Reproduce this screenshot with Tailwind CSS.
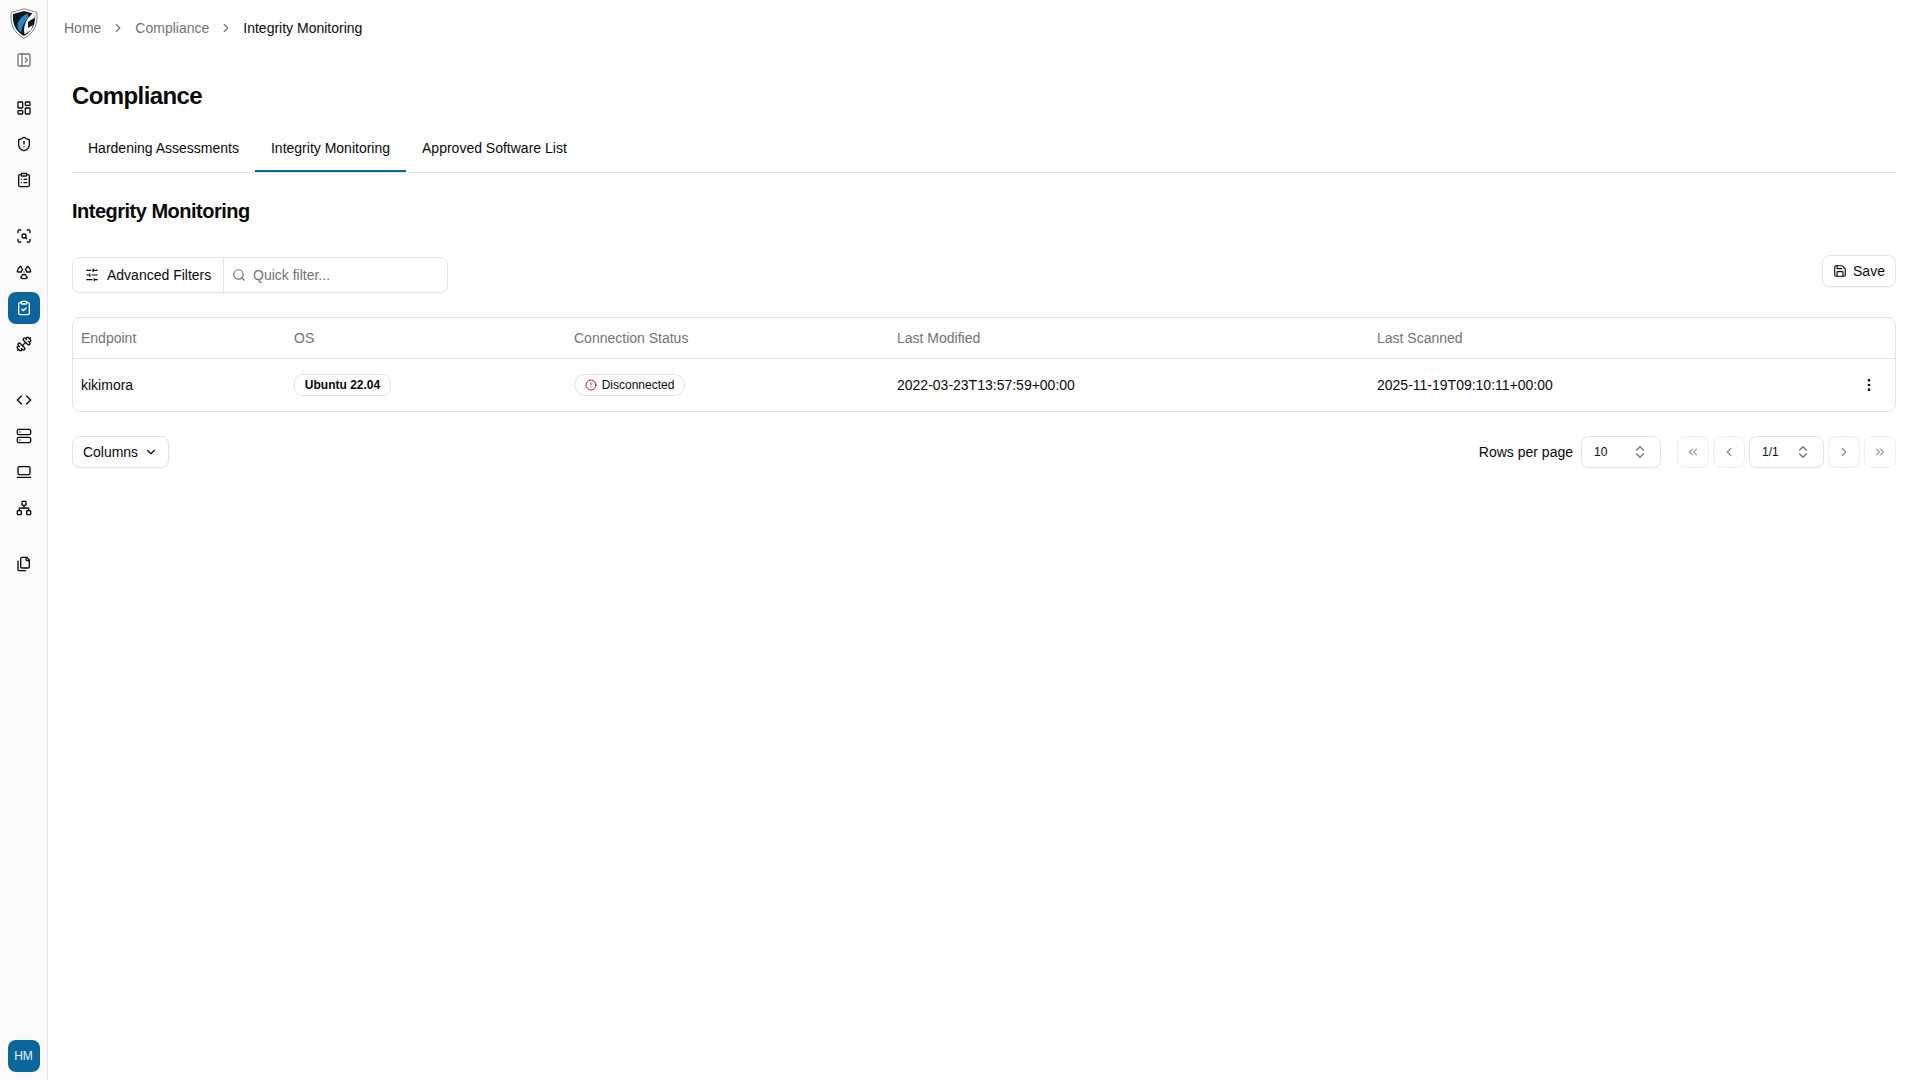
<!DOCTYPE html>
<html lang="en">
<head>
    <meta charset="UTF-8">
    <meta name="viewport" content="width=device-width, initial-scale=1.0">
    <title>Compliance - Integrity Monitoring</title>
    <script src="https://cdn.jsdelivr.net/npm/@tailwindcss/browser@4"></script>
</head>
<body class="bg-white text-[#0a0a0a] font-['Liberation_Sans',Arial,sans-serif] text-sm h-screen overflow-hidden">
<div class="flex h-[1080px]">
    <!-- Sidebar -->
    <aside class="w-[48px] shrink-0 bg-[#fafafa] border-r border-[#e5e5e5] flex flex-col items-center">
        <svg class="w-[28px] h-[31px] mt-[8px]" viewBox="0 0 28 31">
            <path d="M14 .8 L26.8 4.4 C27.8 14 25.5 24.5 14 30.4 C2.5 24.5 .2 14 1.2 4.4 Z" fill="#fff" stroke="#7d848c" stroke-width="1"/>
            <path d="M14 3 L25 6 C25.8 14 23.5 23 14 28 C4.5 23 2.2 14 3 6 Z" fill="#10161f"/>
            <path d="M17.5 5.5 C12 8 8 12.5 7.5 17.5 C7.3 20.5 9 23 11 24.5 C11.5 19.5 14 14 18.5 9.5 Z" fill="#1f87c9"/>
            <path d="M21 7 L24 3.5 L25 6 L24.5 10 L18 14 L18 20 L23 17 L21 22 L14.5 26.5 L14 21.5 C14.5 15.5 17 10.5 21 7 Z" fill="#fff"/>
            <path d="M19.5 13 L23.5 10.5 L23 15.5 L19.5 18 Z" fill="#10161f"/>
        </svg>
        <button class="w-8 h-8 mt-[5px] flex items-center justify-center text-[#737373]">
            <svg class="w-4 h-4" viewBox="0 0 24 24" fill="none" stroke="currentColor" stroke-width="2" stroke-linecap="round" stroke-linejoin="round"><rect x="3" y="3" width="18" height="18" rx="2"/><path d="M9 3v18"/><path d="m14 9 3 3-3 3"/></svg>
        </button>

        <nav class="mt-4 flex flex-col gap-1">
            <a class="w-8 h-8 flex items-center justify-center">
                <svg class="w-4 h-4" viewBox="0 0 24 24" fill="none" stroke="currentColor" stroke-width="2" stroke-linecap="round" stroke-linejoin="round"><rect x="3" y="3" width="7" height="9" rx="1"/><rect x="14" y="3" width="7" height="5" rx="1"/><rect x="14" y="12" width="7" height="9" rx="1"/><rect x="3" y="16" width="7" height="5" rx="1"/></svg>
            </a>
            <a class="w-8 h-8 flex items-center justify-center">
                <svg class="w-4 h-4" viewBox="0 0 24 24" fill="none" stroke="currentColor" stroke-width="2" stroke-linecap="round" stroke-linejoin="round"><path d="M20 13c0 5-3.5 7.5-7.66 8.95a1 1 0 0 1-.67-.01C7.5 20.5 4 18 4 13V6a1 1 0 0 1 1-1c2 0 4.5-1.2 6.24-2.72a1.17 1.17 0 0 1 1.52 0C14.51 3.81 17 5 19 5a1 1 0 0 1 1 1z"/><path d="M12 8v4"/><path d="M12 16h.01"/></svg>
            </a>
            <a class="w-8 h-8 flex items-center justify-center">
                <svg class="w-4 h-4" viewBox="0 0 24 24" fill="none" stroke="currentColor" stroke-width="2" stroke-linecap="round" stroke-linejoin="round"><rect x="8" y="2" width="8" height="4" rx="1"/><path d="M16 4h2a2 2 0 0 1 2 2v14a2 2 0 0 1-2 2H6a2 2 0 0 1-2-2V6a2 2 0 0 1 2-2h2"/><path d="M12 11h4"/><path d="M12 16h4"/><path d="M8 11h.01"/><path d="M8 16h.01"/></svg>
            </a>
        </nav>

        <nav class="mt-6 flex flex-col gap-1">
            <a class="w-8 h-8 flex items-center justify-center">
                <svg class="w-4 h-4" viewBox="0 0 24 24" fill="none" stroke="currentColor" stroke-width="2" stroke-linecap="round" stroke-linejoin="round"><path d="M7 3H5a2 2 0 0 0-2 2v2"/><path d="M17 3h2a2 2 0 0 1 2 2v2"/><path d="M21 17v2a2 2 0 0 1-2 2h-2"/><path d="M7 21H5a2 2 0 0 1-2-2v-2"/><circle cx="12" cy="12" r="3"/><path d="m16 16-1.9-1.9"/></svg>
            </a>
            <a class="w-8 h-8 flex items-center justify-center">
                <svg class="w-4 h-4" viewBox="0 0 24 24" fill="none" stroke="currentColor" stroke-width="2" stroke-linecap="round" stroke-linejoin="round"><path d="M12 12h.01"/><path d="M7.5 4.2c-.3-.5-.9-.7-1.3-.4C3.9 5.5 2.3 8.1 2 11c-.1.5.4 1 1 1h5c0-1.5.8-2.8 2-3.4-1.1-1.9-2-3.5-2.5-4.4z"/><path d="M21 12c.6 0 1-.4 1-1-.3-2.9-1.8-5.5-4.1-7.1-.4-.3-1.1-.2-1.3.3-.6.9-1.5 2.5-2.6 4.3 1.2.7 2 2 2 3.5h5z"/><path d="M7.5 19.8c-.3.5-.1 1.1.4 1.3 2.6 1.2 5.6 1.2 8.2 0 .5-.2.7-.8.4-1.3-.5-.9-1.4-2.5-2.5-4.3-1.2.7-2.8.7-4 0-1.1 1.8-2 3.4-2.5 4.3z"/></svg>
            </a>
            <a class="w-8 h-8 flex items-center justify-center rounded-lg bg-[#0b659f] text-white">
                <svg class="w-4 h-4" viewBox="0 0 24 24" fill="none" stroke="currentColor" stroke-width="2" stroke-linecap="round" stroke-linejoin="round"><rect x="8" y="2" width="8" height="4" rx="1"/><path d="M16 4h2a2 2 0 0 1 2 2v14a2 2 0 0 1-2 2H6a2 2 0 0 1-2-2V6a2 2 0 0 1 2-2h2"/><path d="m9 14 2 2 4-4"/></svg>
            </a>
            <a class="w-8 h-8 flex items-center justify-center">
                <svg class="w-4 h-4" viewBox="0 0 24 24" fill="none" stroke="currentColor" stroke-width="2" stroke-linecap="round" stroke-linejoin="round"><path d="M17.596 12.768a2 2 0 1 0 2.829-2.829l-1.768-1.767a2 2 0 0 0 2.828-2.829l-2.828-2.828a2 2 0 0 0-2.829 2.828l-1.767-1.768a2 2 0 1 0-2.829 2.829z"/><path d="m2.5 21.5 1.4-1.4"/><path d="m20.1 3.9 1.4-1.4"/><path d="M5.343 21.485a2 2 0 1 0 2.829-2.828l1.767 1.768a2 2 0 1 0 2.829-2.829l-6.364-6.364a2 2 0 1 0-2.829 2.829l1.768 1.767a2 2 0 0 0-2.828 2.829z"/><path d="m9.6 14.4 4.8-4.8"/></svg>
            </a>
        </nav>

        <nav class="mt-6 flex flex-col gap-1">
            <a class="w-8 h-8 flex items-center justify-center">
                <svg class="w-4 h-4" viewBox="0 0 24 24" fill="none" stroke="currentColor" stroke-width="2" stroke-linecap="round" stroke-linejoin="round"><path d="m16 18 6-6-6-6"/><path d="m8 6-6 6 6 6"/></svg>
            </a>
            <a class="w-8 h-8 flex items-center justify-center">
                <svg class="w-4 h-4" viewBox="0 0 24 24" fill="none" stroke="currentColor" stroke-width="2" stroke-linecap="round" stroke-linejoin="round"><rect x="2" y="2" width="20" height="8" rx="2"/><rect x="2" y="14" width="20" height="8" rx="2"/><path d="M6 6h.01"/><path d="M6 18h.01"/></svg>
            </a>
            <a class="w-8 h-8 flex items-center justify-center">
                <svg class="w-4 h-4" viewBox="0 0 24 24" fill="none" stroke="currentColor" stroke-width="2" stroke-linecap="round" stroke-linejoin="round"><rect x="3" y="4" width="18" height="12" rx="2"/><path d="M2 20h20"/></svg>
            </a>
            <a class="w-8 h-8 flex items-center justify-center">
                <svg class="w-4 h-4" viewBox="0 0 24 24" fill="none" stroke="currentColor" stroke-width="2" stroke-linecap="round" stroke-linejoin="round"><rect x="16" y="16" width="6" height="6" rx="1"/><rect x="2" y="16" width="6" height="6" rx="1"/><rect x="9" y="2" width="6" height="6" rx="1"/><path d="M5 16v-3a1 1 0 0 1 1-1h12a1 1 0 0 1 1 1v3"/><path d="M12 12V8"/></svg>
            </a>
        </nav>

        <nav class="mt-6 flex flex-col gap-1">
            <a class="w-8 h-8 flex items-center justify-center">
                <svg class="w-4 h-4" viewBox="0 0 24 24" fill="none" stroke="currentColor" stroke-width="2" stroke-linecap="round" stroke-linejoin="round"><path d="M20 7h-3a2 2 0 0 1-2-2V2"/><path d="M9 18a2 2 0 0 1-2-2V4a2 2 0 0 1 2-2h7l4 4v10a2 2 0 0 1-2 2Z"/><path d="M3 7.6v12.8A1.6 1.6 0 0 0 4.6 22h9.8"/></svg>
            </a>
        </nav>

        <div class="mt-auto mb-2 w-8 h-8 rounded-lg bg-[#0b659f] text-[#e8f1f7] text-xs flex items-center justify-center">HM</div>
    </aside>

    <!-- Main -->
    <main class="flex-1 min-w-0 pl-4 pr-6">
        <!-- Breadcrumb -->
        <nav class="h-14 flex items-center text-[#737373]">
            <span>Home</span>
            <svg class="w-3.5 h-3.5 mx-[10px]" viewBox="0 0 24 24" fill="none" stroke="currentColor" stroke-width="2" stroke-linecap="round" stroke-linejoin="round"><path d="m9 18 6-6-6-6"/></svg>
            <span>Compliance</span>
            <svg class="w-3.5 h-3.5 mx-[10px]" viewBox="0 0 24 24" fill="none" stroke="currentColor" stroke-width="2" stroke-linecap="round" stroke-linejoin="round"><path d="m9 18 6-6-6-6"/></svg>
            <span class="text-[#0a0a0a]">Integrity Monitoring</span>
        </nav>

        <div class="ml-2">
            <h1 class="mt-6 h-8 leading-8 text-2xl font-bold tracking-tight">Compliance</h1>

            <!-- Tabs -->
            <div class="mt-4 h-[45px] flex border-b border-[#e5e5e5]">
                <a class="h-11 px-4 pb-[2px] flex items-center border-b-2 border-transparent">Hardening Assessments</a>
                <a class="h-11 px-4 pb-[2px] flex items-center border-b-2 border-[#0b659f]">Integrity Monitoring</a>
                <a class="h-11 px-4 pb-[2px] flex items-center border-b-2 border-transparent">Approved Software List</a>
            </div>

            <h2 class="mt-6 h-7 leading-7 text-xl font-bold tracking-tight">Integrity Monitoring</h2>

            <!-- Filters -->
            <div class="mt-[30px] flex justify-between items-start">
                <div class="mt-[2px] w-[376px] h-9 flex border border-[#e5e5e5] rounded-lg shadow-xs">
                    <button class="w-[151px] shrink-0 border-r border-[#e5e5e5] flex items-center pl-[12px] gap-[8px]">
                        <svg class="w-3.5 h-3.5" viewBox="0 0 24 24" fill="none" stroke="currentColor" stroke-width="2" stroke-linecap="round" stroke-linejoin="round"><path d="M21 4h-7"/><path d="M10 4H3"/><path d="M21 12h-9"/><path d="M8 12H3"/><path d="M21 20h-5"/><path d="M12 20H3"/><path d="M14 2v4"/><path d="M8 10v4"/><path d="M16 18v4"/></svg>
                        Advanced Filters
                    </button>
                    <div class="flex-1 flex items-center pl-[8px] gap-[7px] text-[#737373]">
                        <svg class="w-3.5 h-3.5" viewBox="0 0 24 24" fill="none" stroke="currentColor" stroke-width="2" stroke-linecap="round" stroke-linejoin="round"><circle cx="11" cy="11" r="8"/><path d="m21 21-4.3-4.3"/></svg>
                        <span>Quick filter...</span>
                    </div>
                </div>
                <button class="w-[74px] h-8 flex items-center justify-center gap-[6px] border border-[#e5e5e5] rounded-lg shadow-xs">
                    <svg class="w-3.5 h-3.5" viewBox="0 0 24 24" fill="none" stroke="currentColor" stroke-width="2" stroke-linecap="round" stroke-linejoin="round"><path d="M15.2 3a2 2 0 0 1 1.4.6l3.8 3.8a2 2 0 0 1 .6 1.4V19a2 2 0 0 1-2 2H5a2 2 0 0 1-2-2V5a2 2 0 0 1 2-2z"/><path d="M17 21v-7a1 1 0 0 0-1-1H8a1 1 0 0 0-1 1v7"/><path d="M7 3v4a1 1 0 0 0 1 1h7"/></svg>
                    Save
                </button>
            </div>

            <!-- Table -->
            <div class="mt-6 border border-[#e5e5e5] rounded-lg overflow-hidden">
                <table class="w-full table-fixed">
                    <thead>
                        <tr class="h-10 border-b border-[#e5e5e5] text-[#737373] text-left">
                            <th class="w-[213px] px-2 font-normal">Endpoint</th>
                            <th class="w-[280px] px-2 font-normal">OS</th>
                            <th class="w-[323px] px-2 font-normal">Connection Status</th>
                            <th class="w-[480px] px-2 font-normal">Last Modified</th>
                            <th class="px-2 font-normal">Last Scanned</th>
                            <th class="w-[60px]"></th>
                        </tr>
                    </thead>
                    <tbody>
                        <tr class="h-[53px]">
                            <td class="px-2">kikimora</td>
                            <td class="px-2">
                                <span class="inline-flex h-[22px] w-[97px] items-center justify-center rounded-lg border border-[#e5e5e5] text-xs font-bold">Ubuntu 22.04</span>
                            </td>
                            <td class="px-2">
                                <span class="inline-flex h-[22px] w-[111px] items-center justify-center gap-[5px] rounded-full border border-[#e5e5e5] text-xs">
                                    <svg class="w-3 h-3 text-[#b4232a]" viewBox="0 0 24 24" fill="none" stroke="currentColor" stroke-width="2" stroke-linecap="round" stroke-linejoin="round"><circle cx="12" cy="12" r="10"/><path d="M12 8v4"/><path d="M12 16h.01"/></svg>
                                    Disconnected
                                </span>
                            </td>
                            <td class="px-2">2022-03-23T13:57:59+00:00</td>
                            <td class="px-2">2025-11-19T09:10:11+00:00</td>
                            <td>
                                <svg class="w-4 h-4 ml-[26px]" viewBox="0 0 24 24" fill="none" stroke="currentColor" stroke-width="2" stroke-linecap="round" stroke-linejoin="round"><circle cx="12" cy="12" r="1"/><circle cx="12" cy="5" r="1"/><circle cx="12" cy="19" r="1"/></svg>
                            </td>
                        </tr>
                    </tbody>
                </table>
            </div>

            <!-- Footer controls -->
            <div class="mt-6 flex justify-between items-center">
                <button class="w-[97px] h-8 flex items-center justify-center gap-[6px] border border-[#e5e5e5] rounded-lg shadow-xs">
                    Columns
                    <svg class="w-3.5 h-3.5" viewBox="0 0 24 24" fill="none" stroke="currentColor" stroke-width="2" stroke-linecap="round" stroke-linejoin="round"><path d="m6 9 6 6 6-6"/></svg>
                </button>
                <div class="flex items-center">
                    <span class="mr-2">Rows per page</span>
                    <div class="w-[80px] h-8 mr-4 flex items-center justify-between pl-3 pr-3 border border-[#e5e5e5] rounded-lg shadow-xs text-xs">
                        <span>10</span>
                        <svg class="w-4 h-4 text-[#737373]" viewBox="0 0 24 24" fill="none" stroke="currentColor" stroke-width="2" stroke-linecap="round" stroke-linejoin="round"><path d="m7 15 5 5 5-5"/><path d="m7 9 5-5 5 5"/></svg>
                    </div>
                    <div class="flex items-center gap-1">
                        <button class="w-8 h-8 flex items-center justify-center border border-[#f0f0f0] rounded-lg text-[#9a9a9a]">
                            <svg class="w-3.5 h-3.5" viewBox="0 0 24 24" fill="none" stroke="currentColor" stroke-width="2" stroke-linecap="round" stroke-linejoin="round"><path d="m11 17-5-5 5-5"/><path d="m18 17-5-5 5-5"/></svg>
                        </button>
                        <button class="w-8 h-8 flex items-center justify-center border border-[#f0f0f0] rounded-lg text-[#8a8a8a]">
                            <svg class="w-3.5 h-3.5" viewBox="0 0 24 24" fill="none" stroke="currentColor" stroke-width="2" stroke-linecap="round" stroke-linejoin="round"><path d="m15 18-6-6 6-6"/></svg>
                        </button>
                        <div class="w-[75px] h-8 flex items-center justify-between pl-3 pr-3 border border-[#e5e5e5] rounded-lg shadow-xs text-xs">
                            <span>1/1</span>
                            <svg class="w-4 h-4 text-[#737373]" viewBox="0 0 24 24" fill="none" stroke="currentColor" stroke-width="2" stroke-linecap="round" stroke-linejoin="round"><path d="m7 15 5 5 5-5"/><path d="m7 9 5-5 5 5"/></svg>
                        </div>
                        <button class="w-8 h-8 flex items-center justify-center border border-[#f0f0f0] rounded-lg text-[#8a8a8a]">
                            <svg class="w-3.5 h-3.5" viewBox="0 0 24 24" fill="none" stroke="currentColor" stroke-width="2" stroke-linecap="round" stroke-linejoin="round"><path d="m9 18 6-6-6-6"/></svg>
                        </button>
                        <button class="w-8 h-8 flex items-center justify-center border border-[#f0f0f0] rounded-lg text-[#9a9a9a]">
                            <svg class="w-3.5 h-3.5" viewBox="0 0 24 24" fill="none" stroke="currentColor" stroke-width="2" stroke-linecap="round" stroke-linejoin="round"><path d="m6 17 5-5-5-5"/><path d="m13 17 5-5-5-5"/></svg>
                        </button>
                    </div>
                </div>
            </div>
        </div>
    </main>
</div>
</body>
</html>
